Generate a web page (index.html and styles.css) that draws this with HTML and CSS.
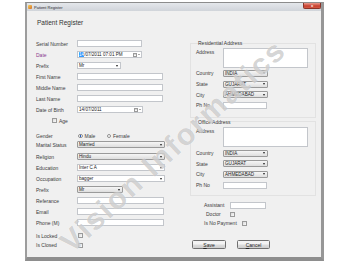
FILE: index.html
```html
<!DOCTYPE html>
<html>
<head>
<meta charset="utf-8">
<link rel="stylesheet" href="styles.css">
</head>
<body>
<div class="window">
  <div class="titlebar">
    <span class="ticon"></span>
    <span class="ttext">Patient Register</span>
    <span class="close">x</span>
  </div>
  <div class="client">
    <h1 class="heading">Patient Register</h1>
    <div class="cols">
      <div class="left">
        <div class="row"><span class="lbl">Serial Number</span><span class="tb w65"></span></div>
        <div class="row"><span class="lbl purple">Date</span><span class="tb w65 dt"><span class="sel">14</span>/07/2011 07:01 PM<span class="cal"></span><span class="arr small"></span></span></div>
        <div class="row"><span class="lbl">Prefix</span><span class="tb combo w44">Mr<span class="arr"></span></span></div>
        <div class="row"><span class="lbl">First Name</span><span class="tb w86"></span></div>
        <div class="row"><span class="lbl">Middle Name</span><span class="tb w86"></span></div>
        <div class="row"><span class="lbl">Last Name</span><span class="tb w86"></span></div>
        <div class="row"><span class="lbl">Date of Birth</span><span class="tb w66 dt">14/07/2011<span class="cal"></span><span class="arr small"></span></span></div>
        <div class="row age"><span class="cb"></span><span class="cbl">Age</span></div>
        <div class="row gender"><span class="lbl">Gender</span><span class="rd on"></span><span class="rl">Male</span><span class="rd"></span><span class="rl">Female</span></div>
        <div class="row marital"><span class="lbl">Marital Status</span><span class="tb combo gray w88">Married<span class="arr"></span></span></div>
        <div class="row mt2"><span class="lbl">Religion</span><span class="tb combo gray w88">Hindu<span class="arr"></span></span></div>
        <div class="row"><span class="lbl">Education</span><span class="tb combo w88">Inter C A<span class="arr"></span></span></div>
        <div class="row"><span class="lbl">Occupation</span><span class="tb combo w88">bagger<span class="arr"></span></span></div>
        <div class="row"><span class="lbl">Prefix</span><span class="tb combo gray w46">Mr<span class="arr"></span></span></div>
        <div class="row"><span class="lbl">Referance</span><span class="tb w87"></span></div>
        <div class="row"><span class="lbl">Email</span><span class="tb w87"></span></div>
        <div class="row"><span class="lbl">Phone (M)</span><span class="tb w87"></span></div>
        <div class="row mt2"><span class="lbl">Is Locked</span><span class="cb ml1"></span></div>
        <div class="row closed"><span class="lbl">Is Closed</span><span class="cb ml1"></span></div>
      </div>
      <div class="right">
        <fieldset class="grp res">
          <legend>Residential Address</legend>
          <div class="arow"><span class="rlbl">Address</span><span class="tb area"></span></div>
          <div class="rrow"><span class="rlbl">Country</span><span class="tb combo gray w45">INDIA<span class="arr"></span></span></div>
          <div class="rrow"><span class="rlbl">State</span><span class="tb combo gray w45">GUJARAT<span class="arr"></span></span></div>
          <div class="rrow"><span class="rlbl">City</span><span class="tb combo gray w45">AHMEDABAD<span class="arr"></span></span></div>
          <div class="rrow"><span class="rlbl">Ph No</span><span class="tb w44"></span></div>
        </fieldset>
        <fieldset class="grp off">
          <legend>Office Address</legend>
          <div class="arow"><span class="rlbl">Address</span><span class="tb area"></span></div>
          <div class="rrow"><span class="rlbl">Country</span><span class="tb combo gray w45">INDIA<span class="arr"></span></span></div>
          <div class="rrow"><span class="rlbl">State</span><span class="tb combo gray w45">GUJARAT<span class="arr"></span></span></div>
          <div class="rrow"><span class="rlbl">City</span><span class="tb combo gray w45">AHMEDABAD<span class="arr"></span></span></div>
          <div class="rrow"><span class="rlbl">Ph No</span><span class="tb w44"></span></div>
        </fieldset>
        <div class="extra">
          <div class="xrow first"><span class="xl w26">Assistant</span><span class="tb w36"></span></div>
          <div class="xrow"><span class="xl w26 pl2">Doctor</span><span class="cb"></span></div>
          <div class="xrow"><span class="xl w38">Is No Payment</span><span class="cb"></span></div>
        </div>
        <div class="btns">
          <span class="btn"><u>S</u>ave</span>
          <span class="btn w33"><u>C</u>ancel</span>
        </div>
      </div>
    </div>
  </div>
  <div class="wm">Vision Informatics</div>
</div>
</body>
</html>
```
FILE: styles.css
```css
* { box-sizing: border-box; }
body {
  margin: 0;
  background: #fff;
  font-family: "Liberation Sans", Arial, sans-serif;
  font-size: 5px;
  color: #3c3c3c;
}
.window {
  position: relative;
  margin: 2px 0 0 25px;
  width: 299px;
  height: 259px;
  border-top: 1px solid #8c8c8c;
  border-left: 2px solid #9d9d9d;
  border-right: 3px solid #979797;
  border-bottom: 4px solid #8e8e8e;
  background: #f0f0f0;
  overflow: hidden;
}
.titlebar {
  height: 8px;
  display: flex;
  align-items: center;
  background: linear-gradient(#e4e7eb, #d0d4da);
}
.ticon {
  width: 4px;
  height: 4px;
  margin-left: 1px;
  border-radius: 1px;
  background: linear-gradient(135deg, #f6cf5a, #d46f28);
}
.ttext {
  font-size: 4px;
  margin-left: 2px;
  color: #2a2a2a;
}
.close {
  align-self: flex-start;
  margin-left: auto;
  width: 18px;
  height: 6px;
  border: 1px solid #8a3328;
  border-top: none;
  border-radius: 0 0 2px 2px;
  background: linear-gradient(#e99a8c, #c8402f 60%, #d35a45);
  color: #fff;
  font-size: 4px;
  line-height: 5px;
  text-align: center;
  font-weight: bold;
}
.client {
  padding-top: 7px;
}
.heading {
  margin: 0 0 11px 10px;
  font-size: 6.5px;
  line-height: 9px;
  font-weight: normal;
  color: #333;
}
.cols {
  display: grid;
  grid-template-columns: 163px 131px;
}
.left {
  padding-left: 9px;
}
.row {
  display: flex;
  align-items: center;
  height: 11px;
}
.row.age { padding-left: 16px; }
.row.gender { height: 8px; margin-top: 6px; }
.row.marital { height: 9px; }
.row.mt2 { margin-top: 2px; }
.row.closed { height: 8px; }
.lbl {
  width: 41px;
  flex: none;
  white-space: nowrap;
}
.purple { color: #8b3a8f; }
.tb {
  flex: none;
  height: 7px;
  background: #fff;
  border: 1px solid #c3c6cb;
  display: flex;
  align-items: center;
  padding-left: 1px;
  font-size: 4.6px;
  line-height: 5px;
  color: #222;
  white-space: nowrap;
}
.w36 { width: 36px; }
.w44 { width: 44px; }
.w45 { width: 45px; }
.w46 { width: 46px; }
.w65 { width: 65px; }
.w66 { width: 66px; }
.w86 { width: 86px; }
.w87 { width: 87px; }
.w88 { width: 88px; }
.sel {
  background: #3399ff;
  color: #fff;
}
.cal {
  margin-left: auto;
  width: 4px;
  height: 4px;
  border: 1px solid #9a9a9a;
  background: linear-gradient(#d8d8d8 30%, #fafafa 30%);
}
.arr {
  margin-left: auto;
  margin-right: 2px;
  width: 0;
  height: 0;
  border-left: 1.5px solid transparent;
  border-right: 1.5px solid transparent;
  border-top: 2px solid #222;
}
.arr.small {
  margin-left: 1px;
  margin-right: 1px;
  border-left-width: 1px;
  border-right-width: 1px;
  border-top-width: 1.5px;
  border-top-color: #555;
}
.combo.gray {
  background: linear-gradient(#f6f6f6, #dedede);
  border-color: #9a9a9a;
  border-radius: 1px;
}
.cb {
  flex: none;
  width: 5px;
  height: 5px;
  border: 1px solid #9a9a9a;
  background: linear-gradient(135deg, #d9d9d9, #fbfbfb);
}
.ml1 { margin-left: 1px; }
.cbl { margin-left: 2px; }
.rd {
  flex: none;
  width: 4.5px;
  height: 4.5px;
  border-radius: 50%;
  border: 1px solid #909090;
  background: #fff;
  margin-left: 1px;
}
.rd.on {
  background: radial-gradient(circle, #2a5fc4 45%, #fff 55%);
}
.rl {
  margin-left: 2px;
  width: 21px;
}
.right {
  display: flex;
  flex-direction: column;
}
.grp {
  margin: 0;
  width: 126px;
  padding: 0 0 6px 5px;
  border: 1px solid #e2e2e2;
  min-width: 0;
}
.grp.res { margin-top: 1px; }
.grp.off { padding-bottom: 4px; }
.grp legend {
  margin-left: 2px;
  padding: 0;
  line-height: 8px;
  color: #333;
}
.arow {
  display: flex;
  align-items: flex-start;
  height: 21px;
  padding-top: 1px;
}
.off .arow { height: 22px; }
.arow .rlbl { line-height: 8px; }
.area {
  height: 20px;
  width: 85px;
}
.rrow {
  display: flex;
  align-items: center;
  height: 10.7px;
}
.rlbl {
  flex: none;
  width: 27px;
  white-space: nowrap;
}
.extra {
  padding-left: 14px;
  margin-top: 5px;
}
.xrow {
  display: flex;
  align-items: center;
  height: 9px;
}
.xl {
  flex: none;
  white-space: nowrap;
}
.w26 { width: 26px; }
.w38 { width: 38px; }
.pl2 { padding-left: 2px; }
.btns {
  display: flex;
  gap: 11px;
  padding-left: 2px;
  margin-top: 12.5px;
}
.btn {
  width: 34px;
  height: 9px;
  border: 1px solid #707070;
  border-radius: 1.5px;
  background: linear-gradient(#f3f3f3 45%, #dcdcdc 55%, #cfcfcf);
  display: flex;
  align-items: center;
  justify-content: center;
  color: #222;
}
.btn.w33 { width: 33px; }
.wm {
  position: absolute;
  left: 146px;
  top: 143px;
  transform: translate(-50%, -50%) rotate(-43deg);
  font-family: "Liberation Sans", Arial, sans-serif;
  font-weight: bold;
  font-size: 30px;
  letter-spacing: 2px;
  color: rgba(110, 110, 110, 0.3);
  text-shadow: 0 0 1px rgba(255, 255, 255, 0.8);
  white-space: nowrap;
  pointer-events: none;
}
```
